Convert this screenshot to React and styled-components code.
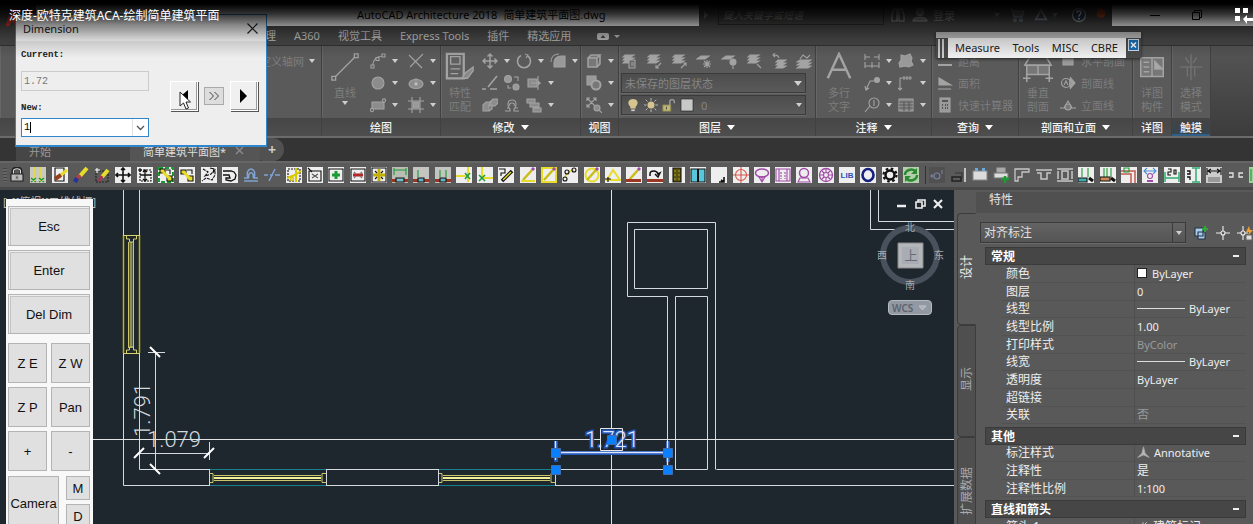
import React from "react";
import styled, { createGlobalStyle, css } from "styled-components";

const ui = '"Noto Sans", "Noto Sans CJK SC", sans-serif';
const mono = '"Liberation Mono", monospace';

const Global = createGlobalStyle`
  * { box-sizing: border-box; }
  body { margin: 0; background: #1e262e; font-family: ${ui}; font-size: 11px; color: #ccc; }
  button, input, select { font-family: inherit; margin: 0; padding: 0; }
  svg { display: block; }
`;

const Screen = styled.main`
  position: relative;
  display: flex;
  flex-direction: column;
  height: 100vh;
  min-height: 420px;
  overflow: hidden;
`;

const plain = css`
  border: 0;
  background: none;
  color: inherit;
  font-size: inherit;
`;

/* ---------- title bar ---------- */
const TitleBar = styled.header`
  display: flex;
  flex: none;
  height: 26px;
  background: #fff;
`;
const AppMark = styled.button`
  ${plain}
  width: 36px;
  background: #454545;
`;
const DocTitle = styled.h1`
  display: flex;
  gap: 6px;
  flex: 1;
  margin: 0;
  padding-left: 321px;
  font-size: 11px;
  font-weight: 400;
  line-height: 30px;
  color: #000;
  white-space: nowrap;
  overflow: hidden;
`;
const Info = styled.div`
  display: flex;
  align-items: center;
  flex: none;
  width: 413px;
  padding-top: 4px;
  background: #4a4a4a;
  color: #9a9a9a;
`;
const Search = styled.input`
  width: 166px;
  height: 20px;
  margin: 0 3px 0 5px;
  padding: 0 4px;
  border: 1px solid #2c2c2c;
  background: #484848;
  font-size: 10px;
  font-style: italic;
  &::placeholder { color: #999; opacity: 1; }
`;
const InfoButton = styled.button`
  ${plain}
  display: flex;
  align-items: center;
  justify-content: center;
  width: ${(p) => p.$w || 22}px;
  height: 20px;
  white-space: nowrap;
`;
const Spacer = styled.span`
  flex: 1;
`;
const WindowButtons = styled.div`
  display: flex;
  flex: none;
  align-items: center;
  gap: 20px;
  width: 141px;
  padding: 4px 0 0 32px;
  color: #000;
`;

const Shade = styled.div`
  position: absolute;
  inset: 0 0 auto 0;
  height: 58px;
  pointer-events: none;
  background: linear-gradient(#000 4px, rgba(0,0,0,.8) 14px, rgba(0,0,0,.47) 25px, rgba(0,0,0,.16) 40px, transparent);
`;
const VideoTitle = styled.div`
  position: absolute;
  top: 7px;
  left: 9px;
  font-size: 12px;
  line-height: 18px;
  color: #fff;
  white-space: nowrap;
`;
const VideoMenu = styled.button`
  ${plain}
  position: absolute;
  top: 7px;
  right: 0;
`;

/* ---------- ribbon ---------- */
const Tabs = styled.nav`
  display: flex;
  flex: none;
  align-items: center;
  gap: 18px;
  height: 20px;
  padding-left: 254px;
  background: #484848;
  border-bottom: 1px solid #333;
`;
const TabButton = styled.button`
  ${plain}
  line-height: 18px;
  color: #c4c4c4;
  white-space: nowrap;
`;
const Ribbon = styled.section`
  display: flex;
  flex: none;
  height: 92px;
  background: linear-gradient(#555, #3c3c3c);
  border-bottom: 2px solid #6b6b6b;
`;
const Panel = styled.section`
  display: flex;
  flex-direction: column;
  flex: 0 0 ${(p) => p.$w}px;
  background: #5a5a5a;
  border-right: 1px solid #414141;
  box-shadow: inset 1px 0 #666;
  overflow: hidden;
`;
const PanelBody = styled.div`
  display: flex;
  flex: 1;
  padding: 4px 0 0 ${(p) => p.$pad || 0}px;
  color: #7d7d7d;
`;
const PanelLabel = styled.h2`
  display: flex;
  align-items: center;
  justify-content: center;
  gap: 6px;
  height: 18px;
  margin: 0;
  background: ${(p) => (p.$hot ? "linear-gradient(#444,#36454f)" : "linear-gradient(#464646,#4e4e4e)")};
  box-shadow: ${(p) => (p.$hot ? "inset 0 -2px #2f6088" : "none")};
  color: #f2f2f2;
  font-size: 11px;
  font-weight: 500;
  white-space: nowrap;
`;
const Arrow = styled.i`
  display: inline-block;
  flex: none;
  border: ${(p) => p.$s || 3}px solid transparent;
  border-top: ${(p) => (p.$s || 3) + 1}px solid ${(p) => p.$c || "#cfcfcf"};
  border-bottom: 0;
`;
const BigTool = styled.button`
  ${plain}
  display: flex;
  flex-direction: column;
  align-items: center;
  flex: 0 0 ${(p) => p.$w}px;
  padding-top: 2px;
  line-height: 14px;
  font-size: 11px;
  height: 68px;
  & > svg { margin-bottom: 4px; flex: none; }
  & > ${Arrow} { margin-top: 1px; }
`;
const Column = styled.div`
  display: flex;
  flex-direction: column;
  flex: ${(p) => (p.$fill ? 1 : "none")};
  margin-left: ${(p) => p.$gap || 0}px;
`;
const ToolRow = styled.div`
  display: flex;
  align-items: center;
  justify-content: ${(p) => (p.$spread ? "space-between" : "flex-start")};
  gap: ${(p) => p.$gap || 0}px;
  height: 22px;
  padding-right: ${(p) => (p.$spread ? 3 : 0)}px;
`;
const Tool = styled.button`
  ${plain}
  display: flex;
  align-items: center;
  height: 20px;
  white-space: nowrap;
`;
const ToolIcon = styled.span`
  display: flex;
  justify-content: center;
  width: 18px;
`;
const CaretBox = styled.span`
  display: flex;
  justify-content: center;
  width: 16px;
`;
const ToolText = styled.span`
  padding-left: 4px;
`;
const DropBox = styled.label`
  position: relative;
  display: flex;
  align-items: center;
  gap: 4px;
  width: 185px;
  height: 20px;
  padding-left: ${(p) => (p.$icons ? 4 : 0)}px;
  background: linear-gradient(#4d4d4d, #5a5a5a);
  border: 1px solid #3b3b3b;
  box-shadow: 0 1px #6a6a6a;
  select {
    ${plain}
    flex: 1;
    height: 100%;
    padding-left: 3px;
    appearance: none;
    color: #858585;
    font-size: 11px;
    outline: 0;
  }
  & > ${Arrow} { position: absolute; right: 3px; }
`;

/* ---------- document tabs ---------- */
const DocTabs = styled.nav`
  display: flex;
  flex: none;
  align-items: stretch;
  height: 23px;
  padding-left: 16px;
  background: #343434;
`;
const DocTab = styled.button`
  ${plain}
  display: flex;
  align-items: center;
  gap: 9px;
  padding: 2px ${(p) => (p.$on ? 16 : 79)}px 0 13px;
  background: ${(p) => (p.$on ? "#555" : "#464646")};
  color: ${(p) => (p.$on ? "#ddd" : "#999")};
  border-radius: 8px 10px 0 0;
  white-space: nowrap;
  & > svg { opacity: .5; }
`;
const AddTab = styled.button`
  ${plain}
  width: 24px;
  background: #515151;
  border-radius: 3px 12px 12px 3px;
  font-size: 14px;
  font-weight: 700;
  line-height: 20px;
`;

/* ---------- icon strip ---------- */
const Strip = styled.div`
  display: flex;
  flex: none;
  align-items: center;
  height: 29px;
  padding-left: 3px;
  background: #5a5a5a;
  border-top: 2px solid #666;
  border-bottom: 3px solid #484848;
  overflow: hidden;
`;
const Grip = styled.i`
  flex: none;
  width: 4px;
  height: 14px;
  margin-right: 2px;
  background: repeating-linear-gradient(#444 0 1px, #666 1px 3px);
`;
const StripGroup = styled.div`
  display: flex;
  flex: none;
  justify-content: space-between;
  width: ${(p) => p.$w}px;
`;
const StripButton = styled.button`
  ${plain}
  width: 16px;
  height: 16px;
`;
const StripRule = styled.i`
  flex: none;
  width: 1px;
  height: 18px;
  margin: 0 3px 0 6px;
  background: #333;
`;

/* ---------- workspace ---------- */
const Workspace = styled.div`
  display: flex;
  flex: 1;
  min-height: 0;
`;
const Canvas = styled.section`
  position: relative;
  flex: 1;
  min-width: 0;
  background: #1e262e;
  overflow: hidden;
`;
const ViewLabel = styled.span`
  position: absolute;
  top: 3px;
  left: 3px;
  font-size: 11px;
  line-height: 18px;
  color: #bbb;
  white-space: nowrap;
`;
const Pad = styled.aside`
  position: absolute;
  top: 9px;
  left: 6px;
  display: flex;
  flex-direction: column;
  gap: 4px;
  width: 87px;
  padding: 7px 3px 2px 2px;
  background: #f8f8f8;
`;
const PadButton = styled.button`
  width: ${(p) => (p.$w ? p.$w + "px" : "auto")};
  height: ${(p) => p.$h || 40}px;
  background: #e0e0e0;
  border: 1px solid #b4b4b4;
  box-shadow: ${(p) => (p.$wide ? "inset 1px 1px #eee, inset 2px 2px #c4c4c4" : "none")};
  font-family: "Liberation Sans", sans-serif;
  font-size: 13px;
  color: #111;
  white-space: nowrap;
`;
const PadGrid = styled.div`
  display: grid;
  grid-template-columns: 1fr 1fr;
  gap: 4px;
  margin: 5px 0 1px;
`;
const PadFoot = styled.div`
  display: flex;
  justify-content: space-between;
`;
const PadPair = styled.div`
  display: flex;
  flex-direction: column;
  gap: 4px;
`;
const ViewButtons = styled.div`
  position: absolute;
  top: 6px;
  right: 8px;
  display: flex;
  gap: 2px;
  button { ${plain} width: 16px; height: 16px; }
`;
const Compass = styled.div`
  position: absolute;
  top: 30px;
  right: 8px;
`;
const Wcs = styled.button`
  position: absolute;
  top: 110px;
  right: 22px;
  display: flex;
  align-items: center;
  gap: 5px;
  width: 44px;
  height: 15px;
  padding-left: 3px;
  border: 1px solid #b5bac2;
  border-radius: 4px;
  background: #9299a3;
  color: #5c636d;
  font-size: 10px;
  font-weight: 600;
`;

/* ---------- properties ---------- */
const Palette = styled.aside`
  display: flex;
  flex: 0 0 299px;
  min-width: 0;
  background: #595959;
`;
const SideTabs = styled.nav`
  display: flex;
  flex-direction: column;
  flex: 0 0 22px;
  padding: 23px 0 0 3px;
`;
const SideTab = styled.button`
  ${plain}
  flex: 0 0 112px;
  border: 1px solid #3c3c3c;
  border-right: ${(p) => (p.$on ? "1px solid transparent" : "1px solid #3c3c3c")};
  border-radius: 4px 0 0 4px;
  background: ${(p) => (p.$on ? "#595959" : "#4f4f4f")};
  color: ${(p) => (p.$on ? "#eee" : "#aaa")};
  font-size: 12px;
  line-height: 16px;
  span {
    display: inline-block;
    writing-mode: vertical-rl;
    text-orientation: sideways;
    transform: rotate(180deg);
  }
`;
const Props = styled.div`
  flex: 1;
  min-width: 0;
  overflow: hidden;
`;
const PropsTitle = styled.h2`
  height: 21px;
  margin: 2px 0 0;
  padding-left: 13px;
  background: #505050;
  font-size: 12px;
  font-weight: 400;
  line-height: 16px;
  color: #e4e4e4;
`;
const Picker = styled.div`
  display: flex;
  align-items: center;
  gap: 4px;
  margin: 9px 0 4px 4px;
`;
const PickerBox = styled(DropBox)`
  flex: none;
  width: 206px;
  height: 21px;
  margin-right: 3px;
  background: linear-gradient(#636363, #555);
  select { font-size: 12px; color: #e0e0e0; }
  &::after {
    content: "";
    position: absolute;
    right: 12px;
    top: 0;
    bottom: 0;
    border-left: 1px solid #3b3b3b;
  }
`;
const IconButton = styled.button`
  ${plain}
  flex: none;
  width: 18px;
  height: 18px;
`;
const Section = styled.section`
  margin: 0 7px 3px 9px;
`;
const SectionHead = styled.h3`
  display: flex;
  align-items: center;
  justify-content: space-between;
  height: 18px;
  margin: 0;
  padding: 0 6px 0 5px;
  background: #464646;
  border: 1px solid #3a3a3a;
  font-size: 12px;
  font-weight: 700;
  color: #fff;
  i { width: 6px; height: 2px; background: #eee; }
`;
const PropTable = styled.table`
  width: 100%;
  border-collapse: collapse;
  table-layout: fixed;
  tr { height: 18px; }
  tr:nth-child(3n), tr:first-child { height: 17px; }
  th, td {
    padding: 0;
    font-size: 12px;
    line-height: 15px;
    text-align: left;
    font-weight: 400;
    color: #eee;
    white-space: nowrap;
    border-bottom: 1px solid #525252;
  }
  th { width: 141px; border-left: 17px solid #595959; padding-left: 4px; }
  td { border-left: 1px solid #4f4f4f; padding-left: 2px; }
`;
const Value = styled.span`
  display: flex;
  align-items: center;
  gap: ${(p) => p.$gap || 4}px;
  font-size: ${(p) => (p.$cjk ? 12 : 11)}px;
  color: ${(p) => (p.$dim ? "#999" : "#eee")};
`;
const Swatch = styled.i`
  width: 10px;
  height: 10px;
  border: 1px solid #222;
  background: #fff;
`;
const Stroke = styled.i`
  width: 48px;
  height: 1px;
  background: #ddd;
`;

/* ---------- floating windows ---------- */
const FloatMenu = styled.nav`
  position: absolute;
  top: 32px;
  right: 112px;
  width: 205px;
  border-top: 6px solid #bdbdbd;
  background: #4b4b4b;
  box-shadow: 0 1px 3px #222;
`;
const FloatRow = styled.div`
  display: flex;
  height: 20px;
`;
const FloatGrip = styled.i`
  width: 6px;
  margin: 1px 4px 0 2px;
  border-left: 2px solid #ccc;
  border-right: 2px solid #ccc;
`;
const FloatItems = styled.div`
  display: flex;
  flex: 1;
  align-items: center;
  justify-content: space-between;
  padding: 0 8px 0 7px;
  background: #f0f0f0;
  button { ${plain} color: #222; font-size: 11px; line-height: 16px; }
`;
const FloatClose = styled.button`
  width: 11px;
  height: 12px;
  margin: 1px 2px 0;
  border: 1px solid #cde;
  background: #1b6fb5;
`;
const Dialog = styled.section`
  position: absolute;
  top: 14px;
  left: 15px;
  width: 252px;
  height: 133px;
  border: 1px solid #2f86cc;
  border-bottom-width: 2px;
  background: #eee;
  color: #222;
`;
const DialogHead = styled.header`
  display: flex;
  align-items: center;
  justify-content: space-between;
  height: 26px;
  padding: 0 8px 0 7px;
  background: #fff;
  font-size: 11px;
  button { ${plain} }
`;
const DialogBody = styled.div`
  display: flex;
  gap: 21px;
  padding: 6px 8px 0 5px;
`;
const Fields = styled.div`
  display: flex;
  flex-direction: column;
  width: 128px;
`;
const FieldLabel = styled.label`
  height: 14px;
  font: 700 9px/16px ${mono};
`;
const OldValue = styled.input`
  height: 20px;
  margin: 10px 0 9px;
  border: 1px solid #ccc;
  background: #eee;
  color: #777;
  && { font: 10px ${mono}; padding-left: 2px; }
`;
const Combo = styled.div`
  position: relative;
  display: flex;
  height: 19px;
  margin-top: 4px;
  border: 1px solid #2f86cc;
  background: #fff;
  input { border: 0; flex: 1; min-width: 0; outline: 0; font: 10px ${mono}; padding-left: 2px; background: none; }
  button { ${plain} width: 16px; border-left: 1px solid #e2e2e2; display: flex; align-items: center; justify-content: center; }
`;
const TextCaret = styled.i`
  position: absolute;
  left: 8px;
  top: 3px;
  width: 1px;
  height: 11px;
  background: #000;
`;
const StepButtons = styled.div`
  display: flex;
  align-items: center;
  justify-content: space-between;
  flex: 1;
  height: 29px;
  margin-top: 34px;
`;
const StepButton = styled.button`
  display: flex;
  align-items: center;
  justify-content: center;
  width: ${(p) => (p.$small ? 20 : 28)}px;
  height: ${(p) => (p.$small ? 18 : 30)}px;
  background: ${(p) => (p.$small ? "#ddd" : "#f0f0f0")};
  border: ${(p) => (p.$small ? "1px solid #aaa" : "1px solid #fff")};
  box-shadow: ${(p) => (p.$small ? "none" : "inset -1px -1px #999, 1px 1px #555")};
`;
const Pointer = styled.svg`
  position: absolute;
  left: 179px;
  top: 91px;
`;

/* ---------- icons ---------- */
const G = ({ children, s = 16, ...r }) => (
  <svg width={s} height={s} viewBox="0 0 16 16" fill="none" stroke="#a3a3a3" strokeWidth="1.1" aria-hidden="true" {...r}>{children}</svg>
);
const F = "#a3a3a3";
const ribbonIcons = {
  arc: <><path d="M2.500 13C3 7 6 3 13 3" /><path d="M1 12h3v3H1zM6 4.500h3v3H6zM12 1h3v3h-3z" fill="#5a5a5a" /></>,
  trim: <><path d="M1 2l13 13M15 1L2 14" /></>,
  circle: <circle cx="8" cy="8" r="6" fill="#8c8c8c" />,
  ellipse: <><ellipse cx="8" cy="9" rx="7" ry="4.500" fill="#8c8c8c" /><path d="M8 3v6" /><circle cx="8" cy="9" r="1.500" fill="#ccc" /></>,
  rect: <><path d="M2 5h12v7H2z" fill="#8c8c8c" /><circle cx="2" cy="13" r="1.600" fill="#5a5a5a" /><circle cx="14" cy="3.500" r="1.600" fill="#5a5a5a" /></>,
  hatch: <><path d="M4 0v16M12 0v16M0 4h16M0 12h16" /><path d="M5 5h6v6H5z" fill="#999" /></>,
  move: <><path d="M8 1v14M1 8h14M5.500 3.500L8 1l2.500 2.500M5.500 12.500L8 15l2.500-2.500M3.500 5.500L1 8l2.500 2.500M12.500 5.500L15 8l-2.500 2.500" strokeWidth="1.500" /></>,
  rotate: <><path d="M5 2.500A6.500 6.500 0 1 0 11 2.500" strokeWidth="1.600" /><path d="M9 1l3 1-2 3" /></>,
  fillet: <><path d="M4 14V10C4 6 7 3 11 3h4v11z" fill="#999" /><path d="M1 9C1 4 4 1 9 1" /></>,
  cut: <><path d="M15 1L6 12M0 14h4M8 14h7" strokeWidth="1.600" /></>,
  copy: <><circle cx="4" cy="4" r="3.500" fill="#999" /><circle cx="12" cy="12" r="3" fill="#999" /><path d="M10 2h4v4M4 10v3h3" /></>,
  stretch: <><path d="M2 4h9v8H2z" fill="#8c8c8c" /><path d="M12 1v14M5 8h9l-2-2M14 8l-2 2" /></>,
  box3: <><path d="M1 8l3-3h5l-2 3v6H1zM8 5l3-3h5v4l-3 3H8zM7 14l3-2V7" fill="#8c8c8c" /></>,
  offset: <><path d="M1 14h5v-2C3 9 3 3 8 3s5 6 2 9v2h5M3 11h2M11 11h3M6 9C5 7 6 6 8 6s3 1 2 3" /></>,
  align: <><path d="M1 2h8v4H1zM4 6h9v4H4zM7 11h8v4H7z" fill="#8c8c8c" /></>,
  cube: <><path d="M2 5h9v9H2zM2 5l3-3h9l-3 3M14 2v9l-3 3" fill="#777" strokeWidth="1.500" /></>,
  over: <><path d="M1 1h9v9H1z" fill="#999" /><circle cx="10" cy="10" r="4.500" fill="#777" strokeWidth="2" /></>,
  zoom: <><path d="M1 1l9 9M10 1L1 10M1 4V1h3M7 1h3v3M1 7v3h3" /><circle cx="11" cy="11" r="3" fill="#8c8c8c" /><path d="M13 13l3 3" /></>,
  dim: <><path d="M1 1v6M15 1v6M1 4h5M10 4h5M1 9v6M8 9v6M15 9v6M1 13h14" /></>,
  leader: <><path d="M2 15L6 6h7M1 11l1 4 3-2" /><circle cx="13" cy="5" r="2.500" fill={F} /></>,
  tagno: <><circle cx="10" cy="6" r="5" /><path d="M10 3v6M6 9l-5 6" /></>,
  cloud: <path d="M3 2l4 1 5-2 2 4-1 3 2 4-4 2-4-1-5 1-1-4 2-3z" fill="#999" />,
  height: <path d="M2 15V3h12M0 13l2 2 2-2M6 5V1M9 5V1M12 5V1" />,
  table: <><path d="M1 2h14v12H1z" fill="#888" /><path d="M1 5h14M1 8h14M1 11h14M6 5v9M11 5v9" stroke="#5a5a5a" /></>,
  dist: <path d="M1 12h14" strokeWidth="2" />,
  area: <><path d="M2 3l12 7H2z" fill={F} /><path d="M1 14h13" /></>,
  calc: <><path d="M3 1h10v14H3z" fill="#999" /><path d="M5 4h6M5 8h1M8 8h1M10 8h1M5 11h1M8 11h1M10 11h1" stroke="#555" strokeWidth="2" /></>,
  sect: <><circle cx="6" cy="8" r="4.500" /><path d="M10 2l5 6-5 6M9 4l5 4-5 4" fill="#999" /><path d="M4 10l2-4 2 4" /></>,
  elev: <><path d="M0 11h16M4 11l4-7 4 7" /><circle cx="8" cy="10" r="3" fill="#777" /></>,
  plane: <path d="M3 2h10v10H3z" fill="#999" />,
};
const layers = (extra) => <><path d="M4 2h9l-3 2H2zM4 5h9l-3 2H2zM4 8h9l-3 2H2z" fill={F} />{extra}</>;
const layerIcons = [
  layers(<path d="M8 7h6v8H8zM10 10h3M10 12h3" fill="#666" />),
  layers(<path d="M15 10l-5 5M10 12v3h3" />),
  layers(<path d="M10 15l5-5M12 10h3v3" />),
  <><path d="M5 3h8l-4 3H1z" fill={F} /><path d="M11 7v8M7 11h8M8 8l6 6M14 8l-6 6" /></>,
  <><path d="M5 3h8l-4 3H1z" fill={F} /><circle cx="12" cy="9" r="3" fill={F} /><path d="M12 12v4" /></>,
  layers(<path d="M11 11l4 4" />),
  <><path d="M7 7h8l-3 2H5zM7 10h8l-3 2H5zM7 13h8l-3 2H5z" fill={F} /><path d="M8 5C7 2 5 2 2 2M4 0L2 2l2 2" /></>,
  <><path d="M4 7h11l-3 2H1zM4 10h11l-3 2H1zM4 13h11l-3 2H1z" fill={F} /><path d="M4 6l3-4 4 3 3-3" /></>,
];
const I = ({ n }) => <ToolIcon><G>{ribbonIcons[n]}</G></ToolIcon>;
const Caret = () => <CaretBox><Arrow /></CaretBox>;
const Split = ({ n }) => <Tool aria-label={n}><I n={n} /><Caret /></Tool>;
const Single = ({ n, text }) => <Tool aria-label={n}><I n={n} />{text && <ToolText>{text}</ToolText>}</Tool>;

const K = "#111", Y = "#e8dc2a", P = "#a04aa8", GR = "#1c9a34", R = "#9c3522";
const tile = (c, bg = "#eee") => <><path d="M0 0h16v16H0z" fill={bg} stroke="none" />{c}</>;
const pencil = <><path d="M3 13L12 3" stroke="#c9bd16" strokeWidth="2.500" /><path d="M12 3l2-2" stroke={P} strokeWidth="3" /></>;
const brick = <><path d="M0 12h16v3H0z" fill={R} stroke="none" /><path d="M5 11h6v4H5z" fill="#5fb6c8" stroke={K} /></>;
const stripA = [
  <><path d="M4 7V4c0-4 8-4 8 0v3" stroke="#222" strokeWidth="3" /><path d="M4.500 7V4c0-3 7-3 7 0v3" stroke="#ddd" /><path d="M2 7h12v7H2z" fill="#bbb" stroke="#222" /><path d="M7 9h2v3H7z" fill="#222" /></>,
  tile(<><path d="M4 0v15M11 0v15" stroke={Y} strokeWidth="1.500" /><path d="M1 11l5 4M6 11l-5 4M9 11l5 4M14 11l-5 4" stroke={GR} strokeWidth="1.500" /></>, "#c9c9c0"),
  tile(<><path d="M3 1h9v13H3z" stroke={K} /><path d="M15 3l-6 5" stroke={Y} strokeWidth="3" /><path d="M9 8l-6 4" stroke="#93401c" strokeWidth="4" /></>),
  <><path d="M14 1L7 9" stroke={Y} strokeWidth="4" /><path d="M7 8l-3 4" stroke="#a44" strokeWidth="4" /><path d="M4 11l-2 4" stroke="#239" strokeWidth="4" /></>,
  <><path d="M2 4h12v11H2z" stroke="#222" strokeDasharray="2 1" /><path d="M1 3h5M3 1v5" stroke="#fff" /><path d="M14 3L8 10" stroke={Y} strokeWidth="4" /><path d="M8 9l-3 5" stroke="#a35" strokeWidth="3" /></>,
  tile(<path d="M8 1v14M1 8h14M6 3l2-2 2 2M6 13l2 2 2-2M3 6L1 8l2 2M13 6l2 2-2 2" stroke={K} strokeWidth="1.600" />),
  tile(<><path d="M3 3h11v11H3z" stroke={K} strokeDasharray="2 1" /><path d="M8 3v11M3 8h11M6 5l2-2 2 2M6 12l2 2 2-2" stroke={K} strokeWidth="1.300" /><path d="M1 3h4M3 1v4" stroke={K} /></>),
  tile(<><path d="M1 1h14v14H1z" stroke={GR} strokeWidth="2" strokeDasharray="4 2" /><path d="M2 2h5v4H2zM9 9h5v5H9z" fill={Y} stroke={K} /><path d="M5 5l6 6" stroke={Y} strokeWidth="3" /><path d="M8 3h4v4" stroke={K} /></>),
  tile(<><path d="M2 3h5v4H2zM9 9h5v5H9z" fill={Y} stroke={K} /><path d="M5 5l6 7" stroke={Y} strokeWidth="3" /><path d="M8 3h5v4" stroke={K} /></>),
  tile(<><path d="M2 2l5 3-3 4 6-2 4-4v5l-3 5-6-2-4 3" stroke={K} strokeDasharray="3 1" /><path d="M9 1l4 1-1 4" stroke={K} /></>),
  tile(<path d="M1 4h8l3 1 2 3-1 4-4 2-5-1v-2h4l-1-3H1" stroke={K} strokeWidth="1.300" />),
  <><path d="M1 14h14M1 11h4c-4-12 10-12 6 0h4M6 11C4 4 12 4 10 11" stroke="#7fa3d4" strokeWidth="1.500" /></>,
  <><path d="M0 8h4M6 8h3M11 8h5M11 2L5 14" stroke="#7fa3d4" strokeWidth="1.500" /></>,
  tile(<><path d="M2 2h12v12H2z" stroke={K} strokeDasharray="2 1" /><path d="M1 11l8-3 6-4M10 1v14" stroke="#d9c800" strokeWidth="2" /><circle cx="6" cy="12" r="1.500" stroke="#d9c800" strokeWidth="1.500" /></>),
  tile(<><path d="M2 4h12v10H2z" stroke={K} /><path d="M5 7l6 4M11 7l-6 4" stroke="#555" /><path d="M1 1l4 4" stroke={K} /></>),
  tile(<><path d="M1 2h14v12H1z" stroke={K} /><path d="M8 4v8M4 8h8" stroke={GR} strokeWidth="3" /></>),
  tile(<><path d="M1 2h14v12H1z" stroke={K} /><path d="M3 8h10" stroke="#b22" strokeWidth="3" /><path d="M4 5l2 2M12 5l-2 2M4 11l2-2M12 11l-2-2" stroke="#777" /></>),
  tile(<><path d="M1 1h14v14H1z" stroke={K} /><path d="M8 2v12M2 8h12" stroke="#c4b000" strokeWidth="3" /><path d="M4 4l2 2M12 4l-2 2M4 12l2-2M12 12l-2-2" stroke={K} /></>),
  tile(<><path d="M2 1v7M14 1v7M2 3h12" stroke={GR} /><path d="M0 12h16v3H0z" fill={R} stroke="none" /><path d="M4 11h8v4H4z" fill="#7bc" stroke={K} /></>, "#b9beb4"),
  tile(<><path d="M5 3v7" stroke={GR} />{brick}</>, "#c4c4c0"),
  tile(<><path d="M5 3v7M11 3v7" stroke={GR} />{brick}</>, "#c4c4c0"),
  tile(<><path d="M0 9h10M12 0v15" stroke={Y} strokeWidth="2" /><path d="M9 6l5 6M14 6l-5 6" stroke={GR} strokeWidth="1.500" /></>),
  tile(<><path d="M5 0v10M7 11h9" stroke={Y} strokeWidth="2" /><path d="M2 8l6 6M8 8l-6 6" stroke={GR} strokeWidth="1.500" /></>),
  tile(<><path d="M1 2h6v4H3v3" stroke={K} /><path d="M4 14L14 4" stroke={K} strokeWidth="3.500" /><path d="M5 13l8-8" stroke={Y} strokeWidth="1.500" /></>),
  tile(<>{pencil}<path d="M1 14h14" stroke={Y} strokeWidth="2" /></>),
  tile(<><path d="M1 1h14v14H1z" stroke={Y} strokeWidth="2" />{pencil}</>),
  tile(<><path d="M3 11C3 7 8 3 12 3" stroke={Y} strokeWidth="1.500" /><circle cx="3" cy="12" r="2" stroke={K} /><circle cx="5" cy="5" r="2" stroke={K} /><circle cx="12" cy="3" r="2" stroke={K} /></>),
  tile(<><circle cx="8" cy="8" r="6.500" stroke={Y} strokeWidth="2" />{pencil}</>),
  tile(<><path d="M2 13L8 3l7 10z" stroke={Y} strokeWidth="2" /><path d="M3 10v5M0 12h6" stroke={K} /></>),
  tile(<>{pencil}<path d="M0 12h15v3H0z" fill={R} stroke="none" /></>),
  tile(<><path d="M3 9V7c0-4 7-4 8 0l2-1-2 4-3-3" stroke={K} strokeWidth="1.500" /><path d="M0 12h16v3H0z" fill={R} stroke="none" /></>),
  tile(<><path d="M4 1h8v14H4z" fill="#5a5410" stroke={K} /><path d="M6 3v11M10 3v11" stroke="#aa9c20" strokeDasharray="2 2" /></>),
  tile(<><path d="M1 2h14v13H1z" fill="#58c6dc" stroke={K} /><path d="M8 2v13" stroke={K} strokeWidth="2" /></>),
  tile(<path d="M8 15h5v-5M10 13l3 2" stroke={K} strokeWidth="1.600" />),
  tile(<><circle cx="8" cy="8" r="5.500" stroke="#d8564a" /><path d="M8 0v16M0 8h16" stroke="#d8564a" /></>),
  tile(<><ellipse cx="8" cy="6" rx="6.500" ry="4" stroke={P} strokeWidth="1.500" /><path d="M5 10h6l-3 5zM8 9v6" stroke={P} /></>),
  tile(<><path d="M1 2h14v12H1zM4 2v12M12 2v12" stroke={P} /><path d="M6 5v7M10 5v7" stroke={P} strokeDasharray="2 1" /></>),
  tile(<><circle cx="8" cy="6" r="4.500" stroke={P} strokeWidth="1.500" /><path d="M4 11h8l2 4H2z" stroke={P} /></>),
  tile(<><circle cx="8" cy="8" r="6.500" stroke={P} strokeWidth="1.300" /><circle cx="8" cy="8" r="2.500" stroke={P} /><path d="M8 1v4M8 11v4M1 8h4M11 8h4M4 4l2 2M12 4l-2 2M4 12l2-2M12 12l-2-2" stroke={P} /></>),
  tile(<text x="8" y="11" textAnchor="middle" fill="#2a50b4" stroke="none" fontSize="8" fontWeight="700" fontFamily="Liberation Sans">LIB</text>),
  tile(<ellipse cx="8" cy="8" rx="5.500" ry="6" stroke="#162080" strokeWidth="2.600" />),
  tile(<><circle cx="8" cy="8" r="4.500" stroke={K} strokeWidth="2.500" /><circle cx="8" cy="8" r="6.500" stroke={K} strokeWidth="2.200" strokeDasharray="2.550 2.550" /></>),
  tile(<><path d="M2 8c0-5 7-7 10-4M14 8c0 5-7 7-10 4" stroke="#2c8a30" strokeWidth="2.500" /><path d="M14 1v6H8zM2 15V9h6z" fill="#2c8a30" stroke="none" /></>, "#b5cfae"),
];
const W = "#e4e4e4";
const stripB = [
  tile(<><circle cx="8" cy="9" r="3" stroke="#7883a0" /><path d="M1 9h4M3 7v4M13 3v4" stroke="#7883a0" /></>, "#505050"),
  <><path d="M2 10h9v4H2z" stroke="#222" strokeWidth="1.500" /><path d="M5 6h7v5" stroke="#333" /><path d="M15 1v14" stroke={W} strokeWidth="1.500" /></>,
  <><path d="M1 4h14v9H1z" fill="#dcdcdc" stroke="#888" /><path d="M3 1h3v3H3zM10 1h3v3h-3z" fill="#6aa8e0" stroke="none" /></>,
  <><path d="M1 6h14v5H1z" fill="#ddd" stroke="#777" /><path d="M4 1h8v4H4z" fill="#aaa" /><path d="M12 9v7M8 12h8" stroke={GR} strokeWidth="2.500" /></>,
  <path d="M1 14V2h14v3H8v5H4v4z" stroke="#c6c6c6" strokeWidth="1.300" />,
  <path d="M0 3h16M1 6h4v6h6V6h4" stroke="#c6c6c6" strokeWidth="1.500" />,
  <><path d="M0 2h16M0 14h16M5 4h6v8H5zM1 4v8M15 4v8" stroke="#c6c6c6" strokeWidth="1.500" /></>,
  tile(<><path d="M4 1v9M10 1v9" stroke={GR} /><path d="M0 11h9v4H0z" fill="#4aa" stroke={K} /><path d="M11 11l4 3" stroke={K} strokeWidth="3" /></>),
  tile(<><path d="M4 1v9M7 1v9M11 1v9" stroke={GR} /><path d="M0 10h10v4H0z" fill="#c85" stroke={K} /><path d="M11 11l4 3" stroke={K} strokeWidth="3" /></>),
  tile(<><path d="M0 7h10v9M0 4h14v12" stroke="#c25a50" strokeWidth="1.500" /><path d="M3 1h5v4H3z" stroke={GR} /></>),
  tile(<><path d="M2 4h12M5 1L2 4l3 3M11 1l3 3-3 3" stroke="#4a8fd8" /><circle cx="8" cy="9" r="2.500" stroke={P} /><path d="M5 14h6" stroke={P} strokeWidth="2" /></>),
  tile(<><path d="M1 5v10M15 5v10M1 11h14" stroke="#2fae74" strokeWidth="1.500" /><path d="M4 2h3v3H4v3h3M10 3h2v4h-2z" stroke={K} /></>),
  tile(<><path d="M7 1h8M7 15h8M11 1v14" stroke="#2fae74" strokeWidth="1.500" /><path d="M2 4h3v3H2M2 10h3v3" stroke={K} strokeWidth="1.300" /></>),
  tile(<><path d="M2 4h12M5 2L2 4l3 2M11 2l3 2-3 2M1 1v7M15 1v7" stroke={K} /><path d="M2 10h12v5H2z" fill="#999" stroke="none" /></>, "#ccc"),
  <path d="M1 6h4v4H1M15 6h-4v4h4" stroke={W} strokeWidth="1.300" />,
  tile(<path d="M2 2v12M5 8h9" stroke={GR} />, "#9fd09f"),
];

/* ---------- drawing ---------- */
const hWindow = (x1, x2) => (
  <g key={x1}>
    <path d={`M${x1} 279.500H${x2}M${x1} 295.500H${x2}`} stroke="#16808c" />
    <path d={`M${x1 + 5} 285.500H${x2 - 5}M${x1 + 5} 290.500H${x2 - 5}`} stroke="#c9c56a" />
    <path d={`M${x1 + 5} 288H${x2 - 5}`} stroke="#f2ee94" strokeWidth="2" />
    <path d={`M${x1 + 1} 283.500h3v9h-3M${x2} 283.500h-4v9h4`} stroke="#c9c56a" />
    <path d={`M${x1 + 0.5} 279v17M${x2 + 0.5} 279v17`} />
  </g>
);
const dimFont = { fontFamily: "Roboto", fontWeight: 300, fontSize: 22, stroke: "none", textAnchor: "middle" };
const Drawing = () => (
  <svg width="2400" height="1200" viewBox="0 0 2400 1200" fill="none" stroke="#d3d9df" aria-hidden="true">
    <path d="M123.500 0V295.500H209M139.500 0V279.500H209M326 279.500H438M326 295.500H438M556 279.500H668M556 295.500H2400M716.500 279.500H2400" />
    <path d="M627.500 32.500H715.500V279.500M627.500 32.500V106.500H667.500V279.500M634.500 39.500H707.500V98.500H634.500zM675.500 279.500V106.500H707.500V279.500z" />
    <path d="M870.500 0V39.500H2400M878.500 0V31.500H2400" />
    <path d="M123.500 45v118M139.500 45v118" stroke="#b9b318" strokeWidth="1.500" />
    <path d="M123 45.500h17M123 163.500h17" stroke="#d8d36c" />
    <path d="M128.500 52v106M133.500 52v106" stroke="#c9c56a" />
    <path d="M131 52v106" stroke="#8c8e55" strokeWidth="3" />
    <path d="M126.500 46v3h3v3h4v-3h3v-3M126.500 163v-3h3v-3h4v3h3v3" stroke="#d8d36c" />
    {hWindow(209, 326)}
    {hWindow(438, 555)}
    <path d="M155.500 163V279M148 162.500h17M139 263.500h70M209.500 252v18" />
    <path d="M150 157l10 10M150 274l10 10M134 268l10-10M204 268l10-10" stroke="#fff" strokeWidth="2" />
    <text {...dimFont} fill="#d3d9df" x="174" y="257">1.079</text>
    <text {...dimFont} fill="#d3d9df" transform="translate(150 220) rotate(-90)">1.791</text>
    <path d="M92 249.500H600M623 249.500H2400M611.500 0V238M611.500 261V1200" stroke="#e2e2e2" />
    <path d="M556 263h112M556 251v21M668 251v21" stroke="#2456b8" strokeWidth="4" />
    <path d="M556 262.500h112M555.500 251v19M667.500 251v28" stroke="#dbe7ff" strokeWidth="1.400" />
    <text {...dimFont} x="612" y="257" style={{ stroke: "#2456b8", strokeWidth: 3, paintOrder: "stroke" }} fill="#dbe7ff">1.721</text>
    <path d="M600.500 238.500h22v22h-22z" stroke="#e6e6e6" />
    <g fill="#0a80ff" stroke="#3f6dab">
      <path d="M551.500 258.500h9v9h-9zM663.500 258.500h9v9h-9zM551.500 275.500h9v9h-9zM663.500 275.500h9v9h-9zM607.500 245.500h9v9h-9z" />
    </g>
  </svg>
);

const rows1 = [
  ["颜色", <Value $gap={5}><Swatch />ByLayer</Value>],
  ["图层", <Value>0</Value>],
  ["线型", <Value><Stroke />ByLayer</Value>],
  ["线型比例", <Value>1.00</Value>],
  ["打印样式", <Value $dim>ByColor</Value>],
  ["线宽", <Value><Stroke />ByLayer</Value>],
  ["透明度", <Value>ByLayer</Value>],
  ["超链接", null],
  ["关联", <Value $cjk $dim>否</Value>],
];
const rows2 = [
  ["标注样式", <Value><G s={13}><path d="M8 1l2 8 5 5-7-3-7 3 5-5z" fill="#bbb" /></G>Annotative</Value>],
  ["注释性", <Value $cjk>是</Value>],
  ["注释性比例", <Value>1:100</Value>],
];
const rows3 = [["箭头 1", <Value $cjk><G s={12}><path d="M3 13L13 3M8 3v10" stroke="#ddd" /></G>建筑标记</Value>]];

const Group = ({ title, rows }) => (
  <Section>
    <SectionHead>{title}<i /></SectionHead>
    <PropTable><tbody>{rows.map(([k, v]) => <tr key={k}><th scope="row">{k}</th><td>{v}</td></tr>)}</tbody></PropTable>
  </Section>
);

export default function App() {
  return (
    <Screen>
      <Global />
      <TitleBar>
        <AppMark aria-label="Application menu">
          <svg width="36" height="26" viewBox="0 0 36 26"><path d="M5 28L11 8h5l5 20h-5l-2-6h-3l-2 6z" fill="#d2382c" /></svg>
        </AppMark>
        <DocTitle><span>AutoCAD Architecture 2018</span><span>简单建筑平面图.dwg</span></DocTitle>
        <Info>
          <svg width="14" height="10" viewBox="0 0 14 10"><path d="M5 1l4 4-4 4z" fill="#888" /></svg>
          <Search aria-label="搜索" placeholder="键入关键字或短语" />
          <InfoButton aria-label="Find"><G><path d="M2 14V8l2-6h3v12zM9 14V2h3l2 6v6z" fill="#444" stroke="#aaa" /></G></InfoButton>
          <InfoButton aria-label="Account"><G><circle cx="8" cy="5" r="3.500" fill="#777" /><path d="M1 14c1-5 13-5 14 0z" fill="#777" /></G></InfoButton>
          <InfoButton $w={26}>登录</InfoButton>
          <Spacer />
          <Arrow $c="#888" />
          <InfoButton $w={34} aria-label="Cart"><G stroke="#8c98ac"><path d="M1 2h2l2 8h8l2-6H4" fill="#666" /><circle cx="6" cy="13" r="1.300" /><circle cx="12" cy="13" r="1.300" /></G></InfoButton>
          <InfoButton $w={14} aria-label="Apps"><G stroke="#8c98ac"><path d="M8 2l6 11H2z" strokeWidth="2" /></G></InfoButton>
          <InfoButton $w={14} aria-label="More"><Arrow $c="#888" /></InfoButton>
          <InfoButton $w={34} aria-label="Help"><G><circle cx="8" cy="8" r="6.500" fill="#2c4260" stroke="#ccc" /><path d="M6 6c0-3 4-3 4-.5 0 2-2 2-2 4M8 11v1.500" stroke="#fff" strokeWidth="1.600" /></G></InfoButton>
          <svg width="16" height="20" viewBox="0 0 16 20"><circle cx="5" cy="8" r="4.500" fill="#d8551c" /></svg>
        </Info>
        <WindowButtons>
          <InfoButton aria-label="Minimize"><svg width="10" height="10"><path d="M0 5.500h10" stroke="#000" /></svg></InfoButton>
          <InfoButton aria-label="Restore"><svg width="10" height="10" fill="none" stroke="#000"><path d="M.5 2.500h7v7h-7zM2.500 2V.5h7v7H8" /></svg></InfoButton>
        </WindowButtons>
      </TitleBar>

      <Tabs>
        {["管理", "A360", "视觉工具", "Express Tools", "插件", "精选应用"].map((t) => <TabButton key={t}>{t}</TabButton>)}
        <TabButton aria-label="Ribbon display">
          <svg width="36" height="10" viewBox="0 0 36 10"><rect x="8" y="2" width="12" height="7" rx="2" fill="#bbb" /><path d="M11.500 7L14 4l2.500 3z" fill="#444" /><path d="M25 4h6l-3 3z" fill="#bbb" /></svg>
        </TabButton>
      </Tabs>

      <Ribbon>
        <Panel $w={322}>
          <PanelBody $pad={249}><Column><ToolRow><Tool>自定义轴网<Caret /></Tool></ToolRow></Column></PanelBody>
          <PanelLabel />
        </Panel>
        <Panel $w={119}>
          <PanelBody>
            <BigTool $w={46}><G s={30} strokeWidth=".7"><path d="M2 14L14 2" /><path d="M1 13h2v2H1zM13 1h2v2h-2z" fill="#5a5a5a" /></G>直线<Arrow /></BigTool>
            <Column $gap={1}>
              <ToolRow $gap={4}><Split n="arc" /><Split n="trim" /></ToolRow>
              <ToolRow $gap={4}><Split n="circle" /><Split n="ellipse" /></ToolRow>
              <ToolRow $gap={4}><Split n="rect" /><Split n="hatch" /></ToolRow>
            </Column>
          </PanelBody>
          <PanelLabel>绘图</PanelLabel>
        </Panel>
        <Panel $w={140}>
          <PanelBody>
            <BigTool $w={38}><G s={30} strokeWidth=".7"><path d="M1 1h9v13H1z" fill="#5f5f5f" strokeWidth="1.200" /><path d="M3 2.500h5v4H3zM3 9h5M3 11.500h4" /><path d="M15 8l-4 3-2 3h3l3-4z" fill="#888" /></G><span>特性</span><span>匹配</span></BigTool>
            <Column $gap={2}>
              <ToolRow><Split n="move" /><Split n="rotate" /><Split n="fillet" /></ToolRow>
              <ToolRow $gap={4}><Single n="cut" /><Single n="copy" /><Split n="stretch" /></ToolRow>
              <ToolRow $gap={4}><Single n="box3" /><Single n="offset" /><Split n="align" /></ToolRow>
            </Column>
          </PanelBody>
          <PanelLabel>修改<Arrow $s={4} $c="#fff" /></PanelLabel>
        </Panel>
        <Panel $w={38}>
          <PanelBody $pad={4}>
            <Column><ToolRow><Split n="cube" /></ToolRow><ToolRow><Split n="over" /></ToolRow><ToolRow><Split n="zoom" /></ToolRow></Column>
          </PanelBody>
          <PanelLabel>视图</PanelLabel>
        </Panel>
        <Panel $w={197}>
          <PanelBody $pad={2}>
            <Column $fill>
              <ToolRow $spread>{layerIcons.map((c, i) => <Tool key={i} aria-label={"layer " + (i + 1)}><G>{c}</G></Tool>)}</ToolRow>
              <ToolRow><DropBox><select aria-label="图层状态"><option>未保存的图层状态</option></select><Arrow $s={4} /></DropBox></ToolRow>
              <ToolRow>
                <DropBox $icons>
                  <G s={14}><path d="M5 10C0 5 4 1 8 1s8 4 3 9v2H5z" fill="#d5c48f" stroke="none" /><path d="M6 14h4" stroke="#ccc" strokeWidth="2" /></G>
                  <G s={14}><circle cx="8" cy="8" r="4" fill="#d5c48f" stroke="none" /><path d="M8 0v3M8 13v3M0 8h3M13 8h3M2 2l2 2M12 12l2 2M14 2l-2 2M4 12l-2 2" stroke="#bbb" /></G>
                  <G s={14}><path d="M1 8h9v7H1z" fill="#c0b878" stroke="#8c8650" /><path d="M9 8V4c0-3 5-3 5 0v2" strokeWidth="1.500" /><path d="M5 10v3" stroke="#444" /></G>
                  <G s={14}><path d="M1 1h14v14H1z" fill="#c8c8c8" stroke="#333" /></G>
                  <select aria-label="图层"><option>0</option></select><Arrow />
                </DropBox>
              </ToolRow>
            </Column>
          </PanelBody>
          <PanelLabel>图层<Arrow $s={4} $c="#fff" /></PanelLabel>
        </Panel>
        <Panel $w={116}>
          <PanelBody>
            <BigTool $w={46}><G s={30}><path d="M2 14L8 1l6 13M4 9.500h8" strokeWidth="1.300" /></G><span>多行</span><span>文字</span></BigTool>
            <Column $gap={1}>
              <ToolRow><Split n="dim" /><Split n="cloud" /></ToolRow>
              <ToolRow><Split n="leader" /><Split n="height" /></ToolRow>
              <ToolRow><Split n="tagno" /><Split n="table" /></ToolRow>
            </Column>
          </PanelBody>
          <PanelLabel>注释<Arrow $s={4} $c="#fff" /></PanelLabel>
        </Panel>
        <Panel $w={87}>
          <PanelBody $pad={4}>
            <Column><ToolRow><Single n="dist" text="距离" /></ToolRow><ToolRow><Single n="area" text="面积" /></ToolRow><ToolRow><Single n="calc" text="快速计算器" /></ToolRow></Column>
          </PanelBody>
          <PanelLabel>查询<Arrow $s={4} $c="#fff" /></PanelLabel>
        </Panel>
        <Panel $w={114}>
          <PanelBody>
            <BigTool $w={38}><G s={30} strokeWidth=".8"><path d="M1 7l3-5h8l3 5z" /><path d="M2 7h12v5H2zM8 7v5" fill="#777" /><path d="M0 14h4M12 14h4M2 12v4M14 12v4" /></G><span>垂直</span><span>剖面</span></BigTool>
            <Column $gap={2}><ToolRow><Single n="plane" text="水平剖面" /></ToolRow><ToolRow><Single n="sect" text="剖面线" /></ToolRow><ToolRow><Single n="elev" text="立面线" /></ToolRow></Column>
          </PanelBody>
          <PanelLabel>剖面和立面<Arrow $s={4} $c="#fff" /></PanelLabel>
        </Panel>
        <Panel $w={39}>
          <PanelBody><BigTool $w={38}><G s={30} strokeWidth=".8"><path d="M2 3h12v10H2zM8 3v10" fill="#777" /><path d="M3.500 5.500h3M3.500 8h3M3.500 10.500h3" /><path d="M9.500 5v4h4z" fill="#aaa" /></G><span>详图</span><span>构件</span></BigTool></PanelBody>
          <PanelLabel>详图</PanelLabel>
        </Panel>
        <Panel $w={39}>
          <PanelBody><BigTool $w={38}><G s={30} strokeWidth=".6" stroke="#777"><path d="M8 1v14M2 8h12M5 3l2 3M11 3L9 6M6 8v5M10 8v5" /></G><span>选择</span><span>模式</span></BigTool></PanelBody>
          <PanelLabel $hot>触摸</PanelLabel>
        </Panel>
      </Ribbon>

      <DocTabs>
        <DocTab>开始</DocTab>
        <DocTab $on>简单建筑平面图*<svg width="9" height="9"><path d="M1 1l7 7M8 1L1 8" stroke="#bbb" strokeWidth="1.500" /></svg></DocTab>
        <AddTab aria-label="New drawing">+</AddTab>
      </DocTabs>

      <Strip>
        <Grip />
        <StripGroup $w={910}>{stripA.map((c, i) => <StripButton key={i} aria-label={"tool " + (i + 1)}><G>{c}</G></StripButton>)}</StripGroup>
        <StripRule />
        <StripGroup $w={336}>{stripB.map((c, i) => <StripButton key={i} aria-label={"wall tool " + (i + 1)}><G>{c}</G></StripButton>)}</StripGroup>
      </Strip>

      <Workspace>
        <Canvas>
          <Drawing />
          <ViewLabel>[–][俯视][二维线框]</ViewLabel>
          <Pad>
            {["Esc", "Enter", "Del Dim"].map((t) => <PadButton key={t} $wide>{t}</PadButton>)}
            <PadGrid>
              {["Z E", "Z W", "Z P", "Pan", "+", "-"].map((t) => <PadButton key={t}>{t}</PadButton>)}
            </PadGrid>
            <PadFoot>
              <PadButton $w={51} $h={54}>Camera</PadButton>
              <PadPair><PadButton $w={24} $h={24}>M</PadButton><PadButton $w={24} $h={24}>D</PadButton></PadPair>
            </PadFoot>
          </Pad>
          <ViewButtons>
            <button aria-label="Minimize view"><G stroke="#eee"><path d="M3 10h9" strokeWidth="2.500" /></G></button>
            <button aria-label="Restore view"><G stroke="#eee"><path d="M4 6h6v6H4zM6 6V4h7v6h-3" strokeWidth="1.600" /></G></button>
            <button aria-label="Close view"><G stroke="#eee"><path d="M4 4l8 8M12 4l-8 8" strokeWidth="2.200" /></G></button>
          </ViewButtons>
          <Compass>
            <svg width="70" height="74" viewBox="0 0 70 74" fontSize="10" textAnchor="middle" fill="#a4abb3">
              <circle cx="34" cy="35" r="27" fill="none" stroke="#49525c" strokeWidth="6" />
              <path d="M22 23h25v25H22z" fill="#b4b7ba" stroke="#888" />
              <path d="M26 27h17v17H26z" fill="#a9adb3" />
              <text x="35" y="40" fontSize="13" fill="#666c75">上</text>
              <text x="34" y="11">北</text><text x="34" y="69">南</text><text x="6" y="39">西</text><text x="63" y="39">东</text>
            </svg>
          </Compass>
          <Wcs>WCS<svg width="9" height="6"><path d="M1 1h7L4.500 5z" fill="#aab0b8" stroke="#c0c5cc" /></svg></Wcs>
        </Canvas>

        <Palette>
          <SideTabs>
            <SideTab $on><span>设计</span></SideTab>
            <SideTab><span>显示</span></SideTab>
            <SideTab><span>扩展数据</span></SideTab>
          </SideTabs>
          <Props>
            <PropsTitle>特性</PropsTitle>
            <Picker>
              <PickerBox><select aria-label="对象类型"><option>对齐标注</option></select><Arrow /></PickerBox>
              <IconButton aria-label="Toggle pick"><G><path d="M2 3h8v8H2zM5 7h7v7H5z" fill="#a9cdee" stroke="#234" /><path d="M12 1v6M9 4h6" stroke="#30a838" strokeWidth="2.200" /></G></IconButton>
              <IconButton aria-label="Select"><G stroke="#eee"><path d="M8 1v5M8 10v5M1 8h5M10 8h5" /><circle cx="8" cy="8" r="2" /></G></IconButton>
              <IconButton aria-label="Quick select"><G stroke="#eee"><path d="M6 1v5M6 10v5M0 8h4M8 8h3" /><circle cx="6" cy="8" r="2" /><path d="M12 1l-3 6h3l-1 4 5-6h-3z" fill="#f0a030" stroke="none" /><path d="M9 10h6v5H9z" fill="#ddd" stroke="#666" /></G></IconButton>
            </Picker>
            <Group title="常规" rows={rows1} />
            <Group title="其他" rows={rows2} />
            <Group title="直线和箭头" rows={rows3} />
          </Props>
        </Palette>
      </Workspace>

      <FloatMenu>
        <FloatRow>
          <FloatGrip />
          <FloatItems>{["Measure", "Tools", "MISC", "CBRE"].map((t) => <button key={t}>{t}</button>)}</FloatItems>
          <FloatClose aria-label="Close menu"><svg width="9" height="10"><path d="M2 2.500l5 5M7 2.500l-5 5" stroke="#fff" strokeWidth="1.500" /></svg></FloatClose>
        </FloatRow>
      </FloatMenu>

      <Dialog>
        <DialogHead>Dimension<button aria-label="Close"><svg width="11" height="11"><path d="M.5.5l10 10M10.500.5l-10 10" stroke="#222" strokeWidth="1.200" /></svg></button></DialogHead>
        <DialogBody>
          <Fields>
            <FieldLabel htmlFor="cur">Current:</FieldLabel>
            <OldValue id="cur" defaultValue="1.72" readOnly />
            <FieldLabel htmlFor="new">New:</FieldLabel>
            <Combo>
              <input id="new" defaultValue="1" /><TextCaret />
              <button aria-label="Open list"><svg width="9" height="6" fill="none"><path d="M1 1l3.500 3.500L8 1" stroke="#555" strokeWidth="1.300" /></svg></button>
            </Combo>
          </Fields>
          <StepButtons>
            <StepButton aria-label="Previous"><svg width="8" height="12"><path d="M8 0v12L1 6z" /></svg></StepButton>
            <StepButton $small aria-label="Skip"><svg width="12" height="10" fill="none"><path d="M1.500 1l4 4-4 4M6.500 1l4 4-4 4" stroke="#444" /></svg></StepButton>
            <StepButton aria-label="Next"><svg width="8" height="14"><path d="M0 0v14l7-7z" /></svg></StepButton>
          </StepButtons>
        </DialogBody>
      </Dialog>
      <Pointer width="13" height="19" viewBox="0 0 13 19"><path d="M1 1v14l3.500-3 2.500 6 2.500-1-2.500-6h4.500z" fill="#fff" stroke="#222" /></Pointer>

      <Shade />
      <VideoTitle>深度-欧特克建筑ACA-绘制简单建筑平面</VideoTitle>
      <VideoMenu aria-label="Playlist">
        <svg width="19" height="18" viewBox="0 0 19 18" fill="#fff"><path d="M1 1h5v5H1zM9 1h5v5H9zM1 9h5v5H1zM9 12l4-4v3h6v3h-6v3z" /></svg>
      </VideoMenu>
    </Screen>
  );
}
